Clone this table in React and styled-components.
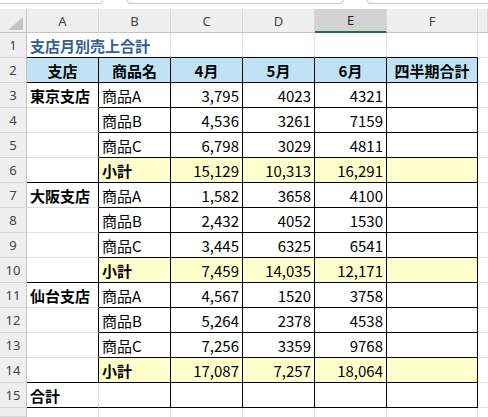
import React from 'react';
import styled, { createGlobalStyle } from 'styled-components';

const GlobalStyle = createGlobalStyle`
    body {
        margin : 0;
        background : #ffffff;
        font-family : "Noto Sans CJK JP", sans-serif;
    }
`

const BLACK = '#000000';
const GRID = '#e1e1e1';

const TopBar = styled.div`
    height : 9px;
    display : flex;
    overflow : hidden;
`

const BarBox = styled.div`
    flex : none;
    width : ${p => p.$w}px;
    margin-left : ${p => p.$ml}px;
    height : 3px;
    border : 1px solid #c9c9c9;
    border-top : none;
    border-radius : 0 0 5px 5px;
`

const Sheet = styled.div`
    display : grid;
    grid-template-columns : 27px 72px 72px 72px 72px 72px 91px 1fr;
    grid-template-rows : 24px repeat(15, 25px) 9px;
    width : 488px;
    overflow : hidden;
`

const ColHead = styled.div`
    background : ${p => p.$active ? '#d3d3d3' : '#efefef'};
    border-right : 1px solid #d9d9d9;
    border-bottom : ${p => p.$active ? '2px solid #1e7145' : '1px solid #c3c3c3'};
    box-sizing : border-box;
    display : flex;
    align-items : center;
    justify-content : center;
    font-family : "Noto Sans", "Open Sans", sans-serif;
    font-size : 13px;
    color : ${p => p.$active ? '#262626' : '#444444'};
`

const Corner = styled.div`
    background : #efefef;
    border-right : 1px solid #c3c3c3;
    border-bottom : 1px solid #c3c3c3;
    box-sizing : border-box;
    display : flex;
    align-items : flex-end;
    justify-content : flex-end;
    padding : 0 3px 2px 0;
`

const RowHead = styled.div`
    background : #efefef;
    border-right : 1px solid #c3c3c3;
    border-bottom : 1px solid #d9d9d9;
    box-sizing : border-box;
    display : flex;
    align-items : center;
    justify-content : center;
    font-family : "Noto Sans", "Open Sans", sans-serif;
    font-size : 13px;
    color : #444444;
`

const Cell = styled.div`
    grid-column : span ${p => p.$span || 1};
    box-sizing : border-box;
    background : ${p => p.$fill || 'transparent'};
    border-right : 1px solid ${p => p.$rb || GRID};
    border-bottom : ${p => p.$bb === 'none' ? 'none' : `1px solid ${p.$bb || GRID}`};
    display : flex;
    align-items : center;
    justify-content : ${p => p.$align === 'right' ? 'flex-end' : p.$align === 'center' ? 'center' : 'flex-start'};
    padding : 1px 3px 0 3px;
    font-size : 15px;
    font-weight : ${p => p.$bold ? 700 : 400};
    color : ${p => p.$color || '#000000'};
    white-space : nowrap;
    overflow : visible;
`

const blocks = [
    {
        branch : '東京支店',
        rows : [
            ['商品A', '3,795', '4023', '4321'],
            ['商品B', '4,536', '3261', '7159'],
            ['商品C', '6,798', '3029', '4811'],
            ['小計', '15,129', '10,313', '16,291'],
        ]
    },
    {
        branch : '大阪支店',
        rows : [
            ['商品A', '1,582', '3658', '4100'],
            ['商品B', '2,432', '4052', '1530'],
            ['商品C', '3,445', '6325', '6541'],
            ['小計', '7,459', '14,035', '12,171'],
        ]
    },
    {
        branch : '仙台支店',
        rows : [
            ['商品A', '4,567', '1520', '3758'],
            ['商品B', '5,264', '2378', '4538'],
            ['商品C', '7,256', '3359', '9768'],
            ['小計', '17,087', '7,257', '18,064'],
        ]
    }
];

const headers = ['支店', '商品名', '4月', '5月', '6月', '四半期合計'];

const App = () => {
    let rowNo = 2;

    const bodyRows = [];
    blocks.forEach((block) => {
        block.rows.forEach((r, i) => {
            rowNo += 1;
            const last = i === block.rows.length - 1;
            const fill = last ? '#ffffcc' : undefined;
            bodyRows.push(
                <React.Fragment key={rowNo}>
                    <RowHead>{rowNo}</RowHead>
                    <Cell $rb={BLACK} $bb={last ? BLACK : GRID} $bold>{i === 0 ? block.branch : ''}</Cell>
                    <Cell $rb={BLACK} $bb={BLACK} $fill={fill} $bold={last}>{r[0]}</Cell>
                    <Cell $rb={BLACK} $bb={BLACK} $fill={fill} $align="right">{r[1]}</Cell>
                    <Cell $rb={BLACK} $bb={BLACK} $fill={fill} $align="right">{r[2]}</Cell>
                    <Cell $rb={BLACK} $bb={BLACK} $fill={fill} $align="right">{r[3]}</Cell>
                    <Cell $rb={BLACK} $bb={BLACK} $fill={fill}></Cell>
                    <Cell $rb="transparent"></Cell>
                </React.Fragment>
            );
        });
    });

    return (
        <>
            <GlobalStyle/>
            <TopBar>
                <BarBox $ml={-4} $w={105}/>
                <BarBox $ml={24} $w={215}/>
                <BarBox $ml={23} $w={140}/>
            </TopBar>
            <Sheet>
                <Corner>
                    <svg width="15" height="13" viewBox="0 0 15 13">
                        <polygon points="15,0 15,13 0,13" fill="#c4c4c4"/>
                    </svg>
                </Corner>
                {['A', 'B', 'C', 'D', 'E', 'F'].map(c => (
                    <ColHead key={c} $active={c === 'E'}>{c}</ColHead>
                ))}
                <ColHead></ColHead>

                <RowHead>1</RowHead>
                <Cell $span={2} $bb={BLACK} $bold $color="#2f5d98">支店月別売上合計</Cell>
                <Cell $bb={BLACK}></Cell>
                <Cell $bb={BLACK}></Cell>
                <Cell $bb={BLACK}></Cell>
                <Cell $bb={BLACK}></Cell>
                <Cell $rb="transparent"></Cell>

                <RowHead>2</RowHead>
                {headers.map(h => (
                    <Cell key={h} $rb={BLACK} $bb={BLACK} $fill="#bfe3f4" $bold $align="center">{h}</Cell>
                ))}
                <Cell $rb="transparent"></Cell>

                {bodyRows}

                <RowHead>15</RowHead>
                <Cell $rb={GRID} $bb={BLACK} $bold>合計</Cell>
                <Cell $rb={BLACK} $bb={BLACK}></Cell>
                <Cell $rb={BLACK} $bb={BLACK}></Cell>
                <Cell $rb={BLACK} $bb={BLACK}></Cell>
                <Cell $rb={BLACK} $bb={BLACK}></Cell>
                <Cell $rb={BLACK} $bb={BLACK}></Cell>
                <Cell $rb="transparent"></Cell>

                <RowHead></RowHead>
                <Cell $bb="none"></Cell>
                <Cell $bb="none"></Cell>
                <Cell $bb="none"></Cell>
                <Cell $bb="none"></Cell>
                <Cell $bb="none"></Cell>
                <Cell $bb="none"></Cell>
                <Cell $rb="transparent" $bb="none"></Cell>
            </Sheet>
        </>
    );
}

export default App;
